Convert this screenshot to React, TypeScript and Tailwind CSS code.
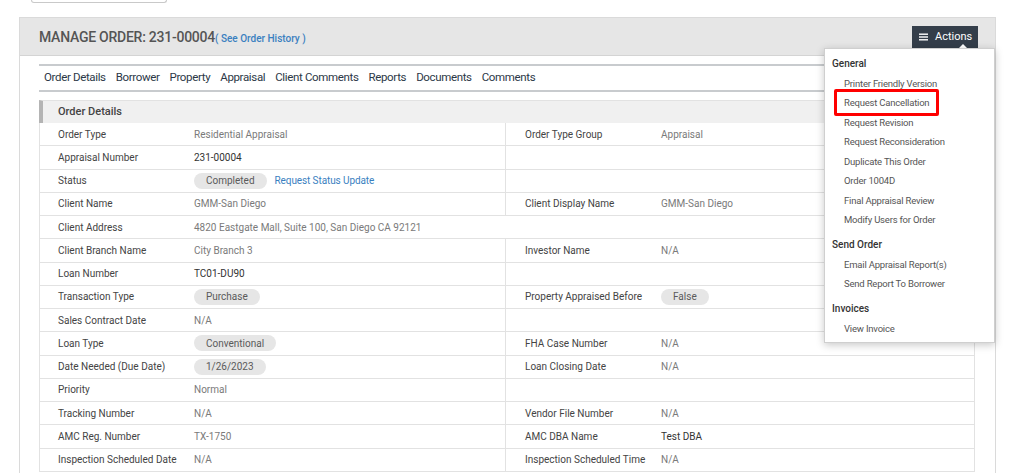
import React from "react";

type Cell =
  | { kind: "text"; v: string }
  | { kind: "dark"; v: string }
  | { kind: "pill"; v: string; link?: string }
  | null;

type Row = { l: string; lv: Cell; r?: string; rv?: Cell; span?: boolean };

const rows: Row[] = [
  { l: "Order Type", lv: { kind: "text", v: "Residential Appraisal" }, r: "Order Type Group", rv: { kind: "text", v: "Appraisal" } },
  { l: "Appraisal Number", lv: { kind: "dark", v: "231-00004" } },
  { l: "Status", lv: { kind: "pill", v: "Completed", link: "Request Status Update" } },
  { l: "Client Name", lv: { kind: "text", v: "GMM-San Diego" }, r: "Client Display Name", rv: { kind: "text", v: "GMM-San Diego" } },
  { l: "Client Address", lv: { kind: "text", v: "4820 Eastgate Mall, Suite 100, San Diego CA 92121" }, span: true },
  { l: "Client Branch Name", lv: { kind: "text", v: "City Branch 3" }, r: "Investor Name", rv: { kind: "text", v: "N/A" } },
  { l: "Loan Number", lv: { kind: "dark", v: "TC01-DU90" } },
  { l: "Transaction Type", lv: { kind: "pill", v: "Purchase" }, r: "Property Appraised Before", rv: { kind: "pill", v: "False" } },
  { l: "Sales Contract Date", lv: { kind: "text", v: "N/A" } },
  { l: "Loan Type", lv: { kind: "pill", v: "Conventional" }, r: "FHA Case Number", rv: { kind: "text", v: "N/A" } },
  { l: "Date Needed (Due Date)", lv: { kind: "pill", v: "1/26/2023" }, r: "Loan Closing Date", rv: { kind: "text", v: "N/A" } },
  { l: "Priority", lv: { kind: "text", v: "Normal" } },
  { l: "Tracking Number", lv: { kind: "text", v: "N/A" }, r: "Vendor File Number", rv: { kind: "text", v: "N/A" } },
  { l: "AMC Reg. Number", lv: { kind: "text", v: "TX-1750" }, r: "AMC DBA Name", rv: { kind: "dark", v: "Test DBA" } },
  { l: "Inspection Scheduled Date", lv: { kind: "text", v: "N/A" }, r: "Inspection Scheduled Time", rv: { kind: "text", v: "N/A" } },
];

function Value({ c }: { c: Cell | undefined }) {
  if (!c) return null;
  if (c.kind === "text") return <span className="text-[#7a7a7a] whitespace-nowrap">{c.v}</span>;
  if (c.kind === "dark") return <span className="text-[#333] whitespace-nowrap">{c.v}</span>;
  return (
    <span className="flex items-center gap-[8px] whitespace-nowrap">
      <span className="inline-flex h-[16px] items-center rounded-full bg-[#e6e6e6] px-[12px] text-[#5a5a5a]">{c.v}</span>
      {c.link && <span className="text-[#3a7fbf] tracking-[-0.1px]">{c.link}</span>}
    </span>
  );
}

const tabs = ["Order Details", "Borrower", "Property", "Appraisal", "Client Comments", "Reports", "Documents", "Comments"];

const menu: { h: string; items: string[] }[] = [
  {
    h: "General",
    items: [
      "Printer Friendly Version",
      "Request Cancellation",
      "Request Revision",
      "Request Reconsideration",
      "Duplicate This Order",
      "Order 1004D",
      "Final Appraisal Review",
      "Modify Users for Order",
    ],
  },
  { h: "Send Order", items: ["Email Appraisal Report(s)", "Send Report To Borrower"] },
  { h: "Invoices", items: ["View Invoice"] },
];

export default function App() {
  return (
    <div className="relative h-[473px] w-[1024px] overflow-hidden bg-white font-['Roboto',sans-serif]">
      {/* partial top button */}
      <div className="ml-[31px] h-[3px] w-[136px] rounded-b-[3px] border border-t-0 border-[#c9c9c9] bg-white" />

      {/* panel */}
      <div className="ml-[19px] mt-[14px] w-[977px] border border-[#dadada] bg-white">
        <div className="flex h-[38px] items-center justify-between border-b border-[#d4d4d4] bg-[#e6e6e6] pl-[19px] pr-[17px]">
          <div className="flex items-baseline pt-[1px]">
            <span className="text-[14px] font-medium text-[#555] tracking-[-0.25px]">MANAGE ORDER: 231-00004</span>
            <span className="text-[10px] font-medium text-[#3a80c0]">( See Order History )</span>
          </div>
          <div className="mt-[1px] flex h-[23px] w-[66px] items-center gap-[7px] bg-[#343e4a] pl-[7px] text-[11px] text-white">
            <svg width="9" height="8" viewBox="0 0 9 8">
              <rect x="0" y="0.5" width="9" height="1.4" fill="#fff" />
              <rect x="0" y="3.3" width="9" height="1.4" fill="#fff" />
              <rect x="0" y="6.1" width="9" height="1.4" fill="#fff" />
            </svg>
            <span className="pt-[1px]">Actions</span>
          </div>
        </div>

        <div className="pl-[19px] pr-[20px] pt-[8px]">
          {/* tabs */}
          <div className="flex h-[28px] items-center border-y-2 border-[#c8cbce] pl-[5px] gap-[10px]">
            {tabs.map((t) => (
              <span key={t} className="text-[11.5px] tracking-[-0.35px] text-[#2c3847] whitespace-nowrap">
                {t}
              </span>
            ))}
          </div>

          {/* section header */}
          <div className="mt-[8px] flex h-[23px] items-center border-l-4 border-t border-t-[#e2e2e2] border-l-[#b4b4b4] bg-[#f0f0f0] pl-[15px] text-[11px] font-medium text-[#444]">
            Order Details
          </div>

          {/* table */}
          <div className="border-x border-[#e2e2e2] text-[10px]">
            {rows.map((r, i) => (
              <div key={i} className="flex h-[23.25px] border-b border-[#e2e2e2]">
                {r.span ? (
                  <div className="flex items-center pl-[18px]">
                    <span className="w-[136px] shrink-0 text-[#444]">{r.l}</span>
                    <Value c={r.lv} />
                  </div>
                ) : (
                  <>
                    <div className="flex w-[466px] shrink-0 items-center border-r border-[#e2e2e2] pl-[18px]">
                      <span className="w-[136px] shrink-0 text-[#444]">{r.l}</span>
                      <Value c={r.lv} />
                    </div>
                    <div className="flex flex-1 items-center pl-[19px]">
                      {r.r && <span className="w-[136px] shrink-0 text-[#444]">{r.r}</span>}
                      <Value c={r.rv} />
                    </div>
                  </>
                )}
              </div>
            ))}
          </div>
          <div className="h-[20px]" />
        </div>
      </div>

      {/* dropdown caret */}
      <div className="absolute left-[958px] top-[44px] h-0 w-0 border-x-[5px] border-b-[5px] border-x-transparent border-b-white" />

      {/* dropdown */}
      <div className="absolute left-[824px] top-[48px] w-[171px] border border-[#cfcfcf] bg-white pb-[3px] pt-[3px] shadow-[0_2px_8px_rgba(0,0,0,0.22)]">
        {menu.map((g, gi) => (
          <div key={g.h} className={gi > 0 ? "mt-[3px]" : ""}>
            <div className="flex h-[22px] items-center pl-[7px] text-[10px] font-medium text-[#333]">{g.h}</div>
            {g.items.map((it) => (
              <div key={it} className="flex h-[19.5px] items-center pl-[19px] text-[9.5px] tracking-[-0.2px] text-[#555] whitespace-nowrap">
                {it}
              </div>
            ))}
          </div>
        ))}
      </div>

      {/* red annotation box */}
      <div className="absolute left-[834px] top-[89px] h-[27px] w-[105px] rounded-[2px] border-[3px] border-[#ff0000]" />
    </div>
  );
}
